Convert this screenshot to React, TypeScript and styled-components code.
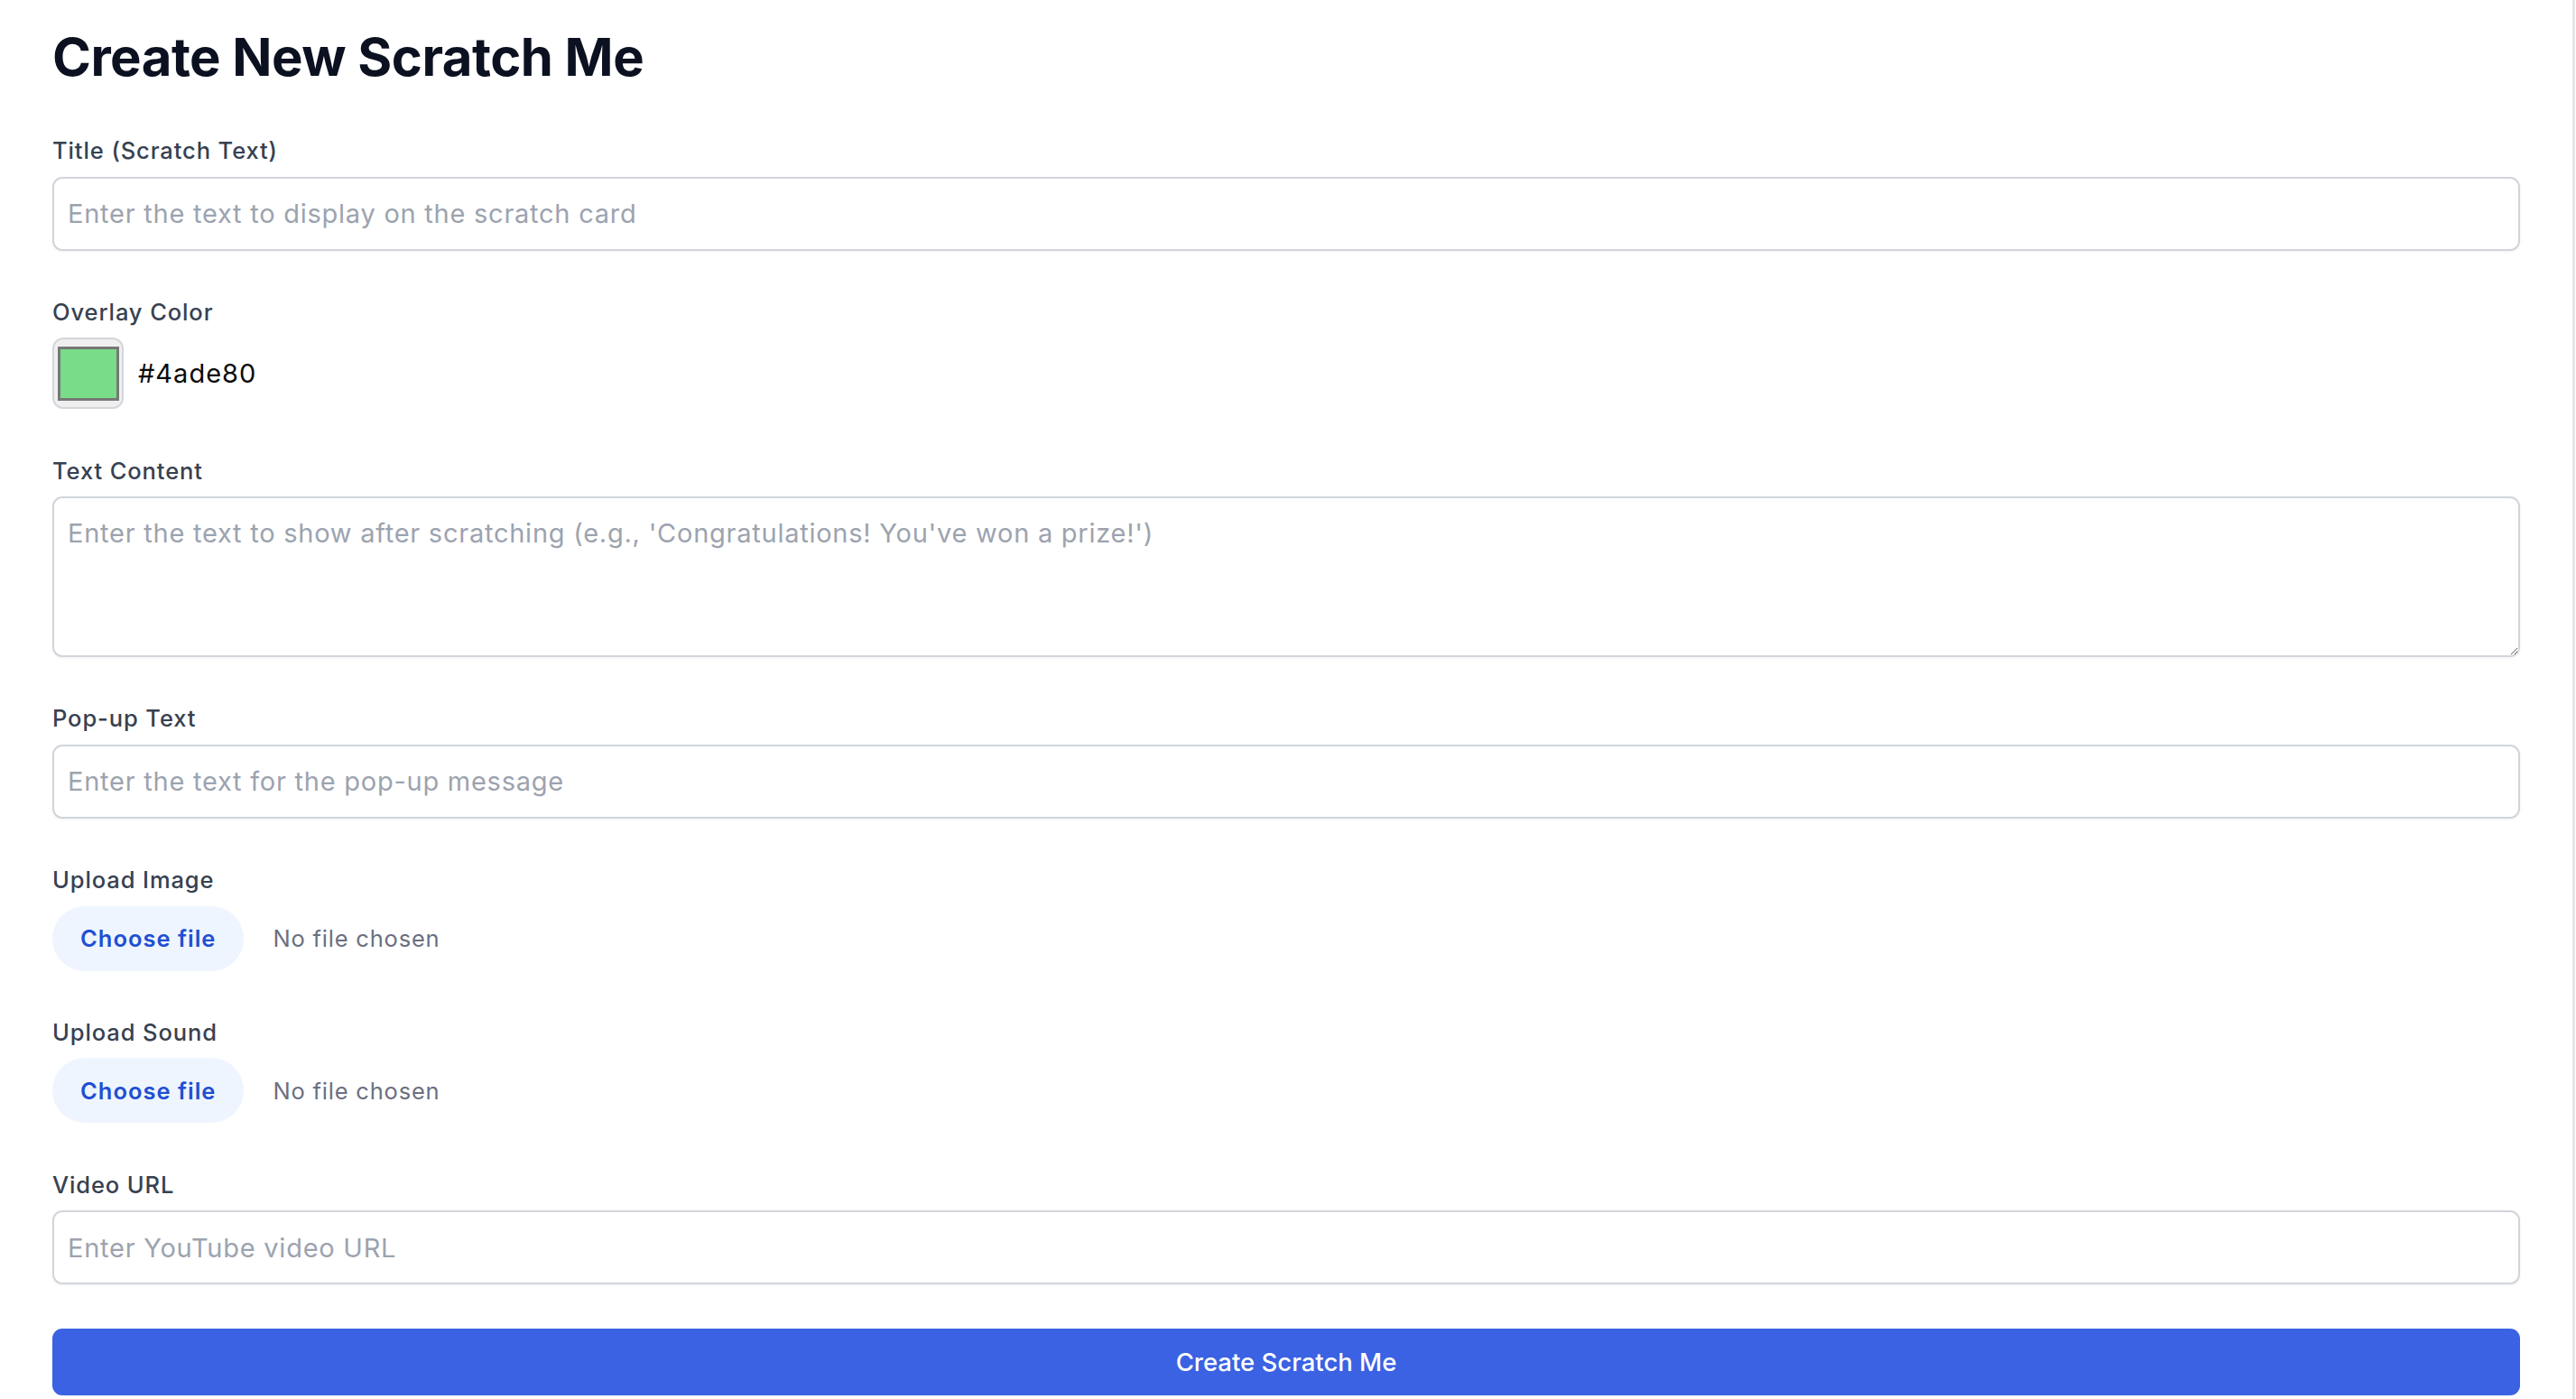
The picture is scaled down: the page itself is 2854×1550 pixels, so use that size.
import React, { useState } from 'react'
import styled, { createGlobalStyle } from 'styled-components'

const GlobalStyle = createGlobalStyle`
  html, body {
    margin: 0;
    padding: 0;
    background: #ffffff;
  }
  body {
    font-family: 'Inter', 'Liberation Sans', sans-serif;
    -webkit-font-smoothing: antialiased;
  }
  * {
    box-sizing: border-box;
  }
`

const Page = styled.div`
  display: flex;
  flex-flow: row nowrap;
  min-height: 100vh;
`

const Main = styled.main`
  flex: 0 0 2850px;
  padding: 28px 58px 0;
`

// thin track line on the right edge of the window
const ScrollEdge = styled.div`
  flex: 1;
  border-left: 3px solid #e6e6e6;
`

const Heading = styled.h1`
  margin: 0 0 51px;
  font-size: 58px;
  line-height: 70px;
  font-weight: 700;
  letter-spacing: -0.5px;
  color: #0b1120;
`

const Form = styled.form`
  display: flex;
  flex-flow: column nowrap;
  gap: 50.3px;
`

const Field = styled.div`
  display: flex;
  flex-flow: column nowrap;
`

const Label = styled.label`
  display: block;
  margin-bottom: 10.5px;
  font-size: 25.5px;
  line-height: 36px;
  font-weight: 500;
  letter-spacing: 0.9px;
  color: #374151;
`

const TextInput = styled.input`
  width: 100%;
  height: 82px;
  padding: 0 15px;
  border: 2px solid #d1d5db;
  border-radius: 11px;
  box-shadow: 0 1px 3px rgba(0, 0, 0, 0.06);
  font-family: inherit;
  font-size: 29px;
  letter-spacing: 0.75px;
  color: #111827;
  background: #fff;
  outline: none;
  &::placeholder {
    color: #9ca3af;
  }
`

const TextArea = styled.textarea`
  display: block;
  width: 100%;
  height: 178px;
  padding: 17px 15px;
  border: 2px solid #d1d5db;
  border-radius: 11px;
  box-shadow: 0 1px 3px rgba(0, 0, 0, 0.06);
  font-family: inherit;
  font-size: 29px;
  line-height: 44px;
  letter-spacing: 0.75px;
  color: #111827;
  background: #fff;
  outline: none;
  resize: vertical;
  &::placeholder {
    color: #9ca3af;
  }
`

const ColorRow = styled.div`
  display: flex;
  flex-flow: row nowrap;
  align-items: center;
  gap: 16px;
`

const Swatch = styled.div`
  width: 79px;
  height: 79px;
  display: flex;
  align-items: center;
  justify-content: center;
  border: 2px solid #d3d6db;
  border-radius: 12px;
  background: #efefef;
`

const SwatchFill = styled.div<{ $color: string }>`
  width: 68px;
  height: 60px;
  border: 3px solid #777777;
  background: ${(p) => p.$color};
`

const ColorValue = styled.span`
  font-size: 29px;
  line-height: 44px;
  letter-spacing: 1px;
  color: #0b0b0b;
`

const FileRow = styled.div`
  display: flex;
  flex-flow: row nowrap;
  align-items: center;
  gap: 32px;
`

const FileButton = styled.button`
  height: 72px;
  padding: 0 31px;
  border: none;
  border-radius: 9999px;
  background: #eef5fe;
  font-family: inherit;
  font-size: 25.5px;
  font-weight: 600;
  letter-spacing: 1px;
  color: #1f4fd3;
  cursor: pointer;
`

const FileStatus = styled.span`
  font-size: 25.5px;
  letter-spacing: 0.8px;
  color: #6b7080;
`

const Submit = styled.button`
  width: 100%;
  height: 74px;
  margin-top: -2px;
  border: none;
  border-radius: 11px;
  background: #3a62e2;
  font-family: inherit;
  font-size: 27.5px;
  font-weight: 500;
  color: #ffffff;
  cursor: pointer;
`

function FilePicker({ label }: { label: string }) {
  return (
    <Field>
      <Label>{label}</Label>
      <FileRow>
        <FileButton type="button">Choose file</FileButton>
        <FileStatus>No file chosen</FileStatus>
      </FileRow>
    </Field>
  )
}

export default function App() {
  const [color] = useState('#4ade80')

  return (
    <Page>
      <GlobalStyle />
      <Main>
        <Heading>Create New Scratch Me</Heading>
        <Form onSubmit={(e) => e.preventDefault()}>
          <Field>
            <Label>Title (Scratch Text)</Label>
            <TextInput placeholder="Enter the text to display on the scratch card" />
          </Field>

          <Field>
            <Label>Overlay Color</Label>
            <ColorRow>
              <Swatch>
                <SwatchFill $color="#78dc88" />
              </Swatch>
              <ColorValue>{color}</ColorValue>
            </ColorRow>
          </Field>

          <Field>
            <Label>Text Content</Label>
            <TextArea placeholder="Enter the text to show after scratching (e.g., 'Congratulations! You've won a prize!')" />
          </Field>

          <Field>
            <Label>Pop-up Text</Label>
            <TextInput placeholder="Enter the text for the pop-up message" />
          </Field>

          <FilePicker label="Upload Image" />
          <FilePicker label="Upload Sound" />

          <Field>
            <Label>Video URL</Label>
            <TextInput placeholder="Enter YouTube video URL" />
          </Field>

          <Submit type="submit">Create Scratch Me</Submit>
        </Form>
      </Main>
      <ScrollEdge />
    </Page>
  )
}
